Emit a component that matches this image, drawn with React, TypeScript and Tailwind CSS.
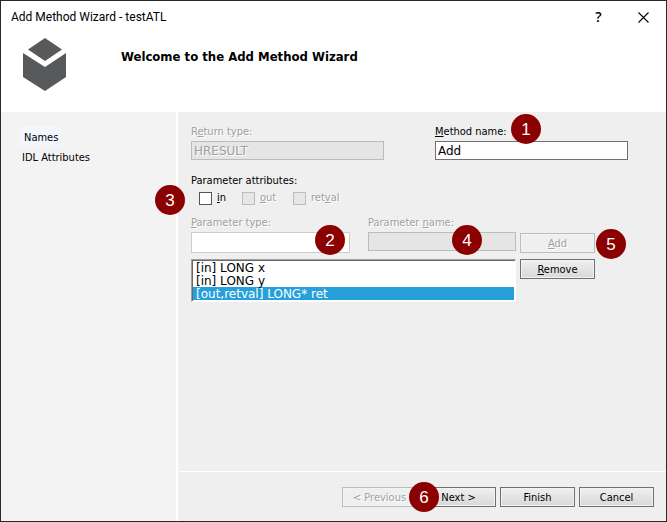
import { useState } from "react";
import type { ReactNode } from "react";

const params = ["[in] LONG x", "[in] LONG y", "[out,retval] LONG* ret"];

function Badge({ n, className }: { n: number; className: string }) {
  return (
    <span
      className={`absolute z-10 flex size-[30px] items-center justify-center rounded-full bg-[#8b0000] font-['Liberation_Sans',Arial,sans-serif] text-[17px] leading-none text-white ${className}`}
    >
      {n}
    </span>
  );
}

function PushButton({ children, disabled }: { children: ReactNode; disabled?: boolean }) {
  return (
    <button
      type="button"
      disabled={disabled}
      className="h-5 w-[75px] shrink-0 border border-[#707070] bg-gradient-to-b from-[#f0f0f0] to-[#d8d8d8] pt-px text-center leading-[18px] whitespace-nowrap text-black shadow-[inset_0_0_0_1px_#f3f3f3] disabled:border-[#bcbcbc] disabled:from-[#efefef] disabled:to-[#efefef] disabled:text-[#a0a0a0] disabled:[text-shadow:1px_1px_0_#fff]"
    >
      {children}
    </button>
  );
}

function Check({ id, disabled, children }: { id: string; disabled?: boolean; children: ReactNode }) {
  return (
    <div className="flex items-center gap-[5px]">
      <input
        id={id}
        type="checkbox"
        disabled={disabled}
        className="size-[13px] appearance-none border border-[#555] bg-white checked:bg-[#26a0da] disabled:border-[#bcbcbc] disabled:bg-[#e6e6e6]"
      />
      <label
        htmlFor={id}
        className={disabled ? "text-[#a0a0a0] [text-shadow:1px_1px_0_#fff]" : ""}
      >
        {children}
      </label>
    </div>
  );
}

const dimLabel = "block h-4 whitespace-nowrap text-[#a0a0a0] [text-shadow:1px_1px_0_#fff]";
const wideText = "font-['DejaVu_Sans',Verdana,sans-serif] text-[12px]";

export default function App() {
  const [selected, setSelected] = useState(2);
  const [name, setName] = useState("Add");

  return (
    <div className="flex min-h-screen flex-col border border-[#2b262b] bg-[#efefef] font-['DejaVu_Sans_Condensed','DejaVu_Sans',Tahoma,sans-serif] text-[11px] leading-4 text-black">
      <header className="h-[111px] bg-white">
        <div className="flex h-8 items-center justify-between pl-[10px]">
          <span className="font-[Roboto,'Segoe_UI',sans-serif] text-[12px]">
            Add Method Wizard - testATL
          </span>
          <div className="flex">
            <button
              type="button"
              aria-label="Help"
              className="flex h-7 w-[45px] items-center justify-center font-['Open_Sans','Segoe_UI',sans-serif] text-[14px] font-semibold"
            >
              ?
            </button>
            <button type="button" aria-label="Close" className="flex h-7 w-[45px] items-center justify-center">
              <svg width="11" height="11" viewBox="0 0 11 11" stroke="#000" strokeWidth="1.1">
                <path d="M.5 .5 10.5 10.5M10.5 .5 .5 10.5" />
              </svg>
            </button>
          </div>
        </div>
        <div className="flex pl-[22px]">
          <svg className="mt-[5px]" width="43" height="53" viewBox="0 0 43 53" fill="#58595b">
            <path d="M22 0 39 11.5 22 23 5 11.5Z" />
            <path d="M0 15 22 29 43 15V39L22 53 0 39Z" />
          </svg>
          <h1 className="ml-[55px] mt-4 text-[13px] font-bold">Welcome to the Add Method Wizard</h1>
        </div>
      </header>

      <div className="flex flex-1">
        <nav className="w-[175px] shrink-0 bg-[#f3f3f3] pl-[19px] pt-[14px]">
          <a href="#names" className="block h-[21px] w-10 bg-[#f3f6fd] pl-1 pt-1">
            Names
          </a>
          <a href="#idl" className="block w-fit pl-[2px] pt-[3px]">
            IDL Attributes
          </a>
        </nav>

        <div className="flex flex-1 flex-col border-l-2 border-white">
          <main className="flex-1 pl-[13px] pt-3">
            <div className="flex gap-[51px]">
              <div className="w-[193px]">
                <label htmlFor="return-type" className={dimLabel}>
                  R<u>e</u>turn type:
                </label>
                <input
                  id="return-type"
                  disabled
                  defaultValue="HRESULT"
                  className={`mt-px block h-[19px] w-full border border-[#bcbcbc] bg-[#e5e5e5] px-[2px] text-[#a0a0a0] [text-shadow:1px_1px_0_#fff] ${wideText}`}
                />
              </div>
              <div className="relative w-[193px]">
                <label htmlFor="method-name" className="block h-4">
                  <u>M</u>ethod name:
                </label>
                <input
                  id="method-name"
                  value={name}
                  onChange={(e) => setName(e.target.value)}
                  className={`mt-px block h-[19px] w-full border border-[#707070] bg-white px-[2px] outline-none ${wideText}`}
                />
                <Badge n={1} className="-top-[10px] left-[76px]" />
              </div>
            </div>

            <fieldset className="relative mt-[13px]">
              <legend className="h-4">Parameter attributes:</legend>
              <div className="mt-px flex pl-2">
                <div className="w-[43px]">
                  <Check id="attr-in">
                    <u>i</u>n
                  </Check>
                </div>
                <div className="w-[51px]">
                  <Check id="attr-out" disabled>
                    <u>o</u>ut
                  </Check>
                </div>
                <Check id="attr-retval" disabled>
                  ret<u>v</u>al
                </Check>
              </div>
              <Badge n={3} className="-left-9 -top-[4px]" />
            </fieldset>

            <div className="mt-[9px] flex">
              <div className="relative w-[159px]">
                <label htmlFor="param-type" className={dimLabel}>
                  <u>P</u>arameter type:
                </label>
                <select
                  id="param-type"
                  disabled
                  className="mt-px block h-[21px] w-full appearance-none border border-[#cccccc] bg-white opacity-100"
                />
                <Badge n={2} className="left-[124px] top-[10px]" />
              </div>
              <div className="relative ml-[18px] w-[148px]">
                <label htmlFor="param-name" className={dimLabel}>
                  Parameter <u>n</u>ame:
                </label>
                <input
                  id="param-name"
                  disabled
                  className="mt-px block h-[19px] w-full border border-[#bcbcbc] bg-[#e5e5e5]"
                />
                <Badge n={4} className="left-[84px] top-[10px]" />
              </div>
              <div className="relative ml-1 flex items-end">
                <PushButton disabled>
                  <u>A</u>dd
                </PushButton>
                <Badge n={5} className="left-[76px] top-[14px]" />
              </div>
            </div>

            <div className="mt-[6px] flex gap-1">
              <ul
                role="listbox"
                aria-label="Parameters"
                className={`w-[325px] border border-b-white border-l-[#a0a0a0] border-r-white border-t-[#a0a0a0] bg-white p-px shadow-[inset_1px_1px_0_#696969] ${wideText}`}
              >
                {params.map((p, i) => (
                  <li
                    key={p}
                    role="option"
                    aria-selected={i === selected}
                    onClick={() => setSelected(i)}
                    className="h-[13px] pl-[3px] leading-[15px] aria-selected:bg-[#26a0da] aria-selected:text-white"
                  >
                    {p}
                  </li>
                ))}
              </ul>
              <PushButton>
                <u>R</u>emove
              </PushButton>
            </div>
          </main>

          <footer className="ml-px flex h-[50px] justify-end gap-1 border-t border-white pr-3 pt-[15px]">
            <PushButton disabled>&lt; Previous</PushButton>
            <div className="relative">
              <PushButton>Next &gt;</PushButton>
              <Badge n={6} className="-left-3 -top-[5px]" />
            </div>
            <PushButton>Finish</PushButton>
            <PushButton>Cancel</PushButton>
          </footer>
        </div>
      </div>
    </div>
  );
}
